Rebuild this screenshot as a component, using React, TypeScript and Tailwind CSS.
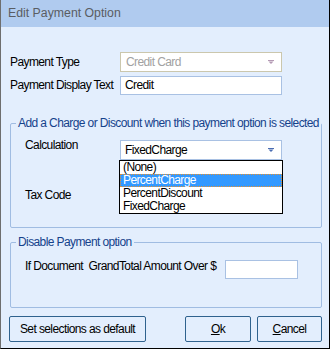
import React from "react";

const Arrow = ({ color }: { color: string }) => (
  <svg width="6" height="4" viewBox="0 0 6 4" className="shrink-0">
    <path d="M0 0.5H6" stroke={color} strokeWidth="1" />
    <path d="M0.5 1.5H5.5L3 4Z" fill={color} />
  </svg>
);

const App = () => {
  return (
    <div className="w-[330px] h-[349px] bg-[#e3eefd] border-l border-l-[#6e6e6e] border-r border-r-black border-b border-b-black flex flex-col font-['Liberation_Sans',Arial,sans-serif] text-[12px] tracking-[-0.6px] leading-[15px] text-black whitespace-nowrap">
      <div className="h-[27px] shrink-0 bg-[#b0cbef] pl-[7px] flex items-center text-[12.3px] tracking-normal text-[#5a5d63]">
        Edit Payment Option
      </div>

      <div className="pl-[9px] pr-[7px] pt-[25px]">
        {/* payment type */}
        <div className="flex items-center h-[20px]">
          <div className="w-[110px]">Payment Type</div>
          <div className="w-[162px] h-[20px] border border-[#cbc7ad] bg-white flex items-center justify-between pl-[5px] pr-[7px] text-[#a2a2a2]">
            <span>Credit Card</span>
            <Arrow color="#b49ab4" />
          </div>
        </div>

        {/* display text */}
        <div className="flex items-center h-[19px] mt-[4px]">
          <div className="w-[110px]">Payment Display Text</div>
          <div className="w-[162px] h-[19px] border border-[#a9c1e3] bg-white flex items-center pl-[4px]">
            Credit
          </div>
        </div>

        {/* charge / discount group */}
        <fieldset className="relative mt-[21px] h-[112px] w-[312px] border border-[#a0bce2] rounded-[2px]">
          <legend className="ml-[5px] px-[2px] text-[#15428b] leading-[15px]">
            Add a Charge or Discount when this payment option is selected
          </legend>
          <div className="flex items-start mt-[7px] pl-[14px]">
            <div className="w-[95px]">Calculation</div>
            <div className="relative mt-[2px]">
              <div className="w-[162px] h-[20px] border border-[#a9c1e3] bg-white flex items-center justify-between pl-[4px] pr-[7px]">
                <span>FixedCharge</span>
                <Arrow color="#4b6db2" />
              </div>
              <div className="absolute left-[-1px] top-full w-[164px] border border-black bg-white z-10 leading-[13px]">
                <div className="h-[13px] pl-[3px]">(None)</div>
                <div className="h-[13px] pl-[2px] bg-[#3399ff] text-white border border-dotted border-[#e8902c] leading-[11px]">
                  PercentCharge
                </div>
                <div className="h-[13px] pl-[3px]">PercentDiscount</div>
                <div className="h-[13px] pl-[3px]">FixedCharge</div>
              </div>
            </div>
          </div>
          <div className="mt-[28px] pl-[14px]">Tax Code</div>
        </fieldset>

        {/* disable group */}
        <fieldset className="mt-[7px] h-[73px] w-[312px] border border-[#a0bce2] rounded-[2px]">
          <legend className="ml-[5px] px-[2px] text-[#15428b] leading-[15px]">
            Disable Payment option
          </legend>
          <div className="flex items-start mt-[9px] pl-[14px]">
            <div className="w-[200px] whitespace-pre">If Document  GrandTotal Amount Over $</div>
            <div className="mt-[1px] w-[73px] h-[19px] border border-[#a9c1e3] bg-white" />
          </div>
        </fieldset>

        {/* buttons */}
        <div className="flex justify-between mt-[8px] -ml-[1px] w-[313px]">
          <button className="w-[137px] h-[26px] border border-[#2f628e] rounded-[2px] bg-[#e3eefd]">
            Set selections as default
          </button>
          <div className="flex gap-[6px]">
            <button className="w-[66px] h-[26px] border border-[#2f628e] rounded-[2px] bg-[#e3eefd]">
              <span className="underline">O</span>k
            </button>
            <button className="w-[65px] h-[26px] border border-[#2f628e] rounded-[2px] bg-[#e3eefd]">
              <span className="underline">C</span>ancel
            </button>
          </div>
        </div>
      </div>
    </div>
  );
};

export default App;
